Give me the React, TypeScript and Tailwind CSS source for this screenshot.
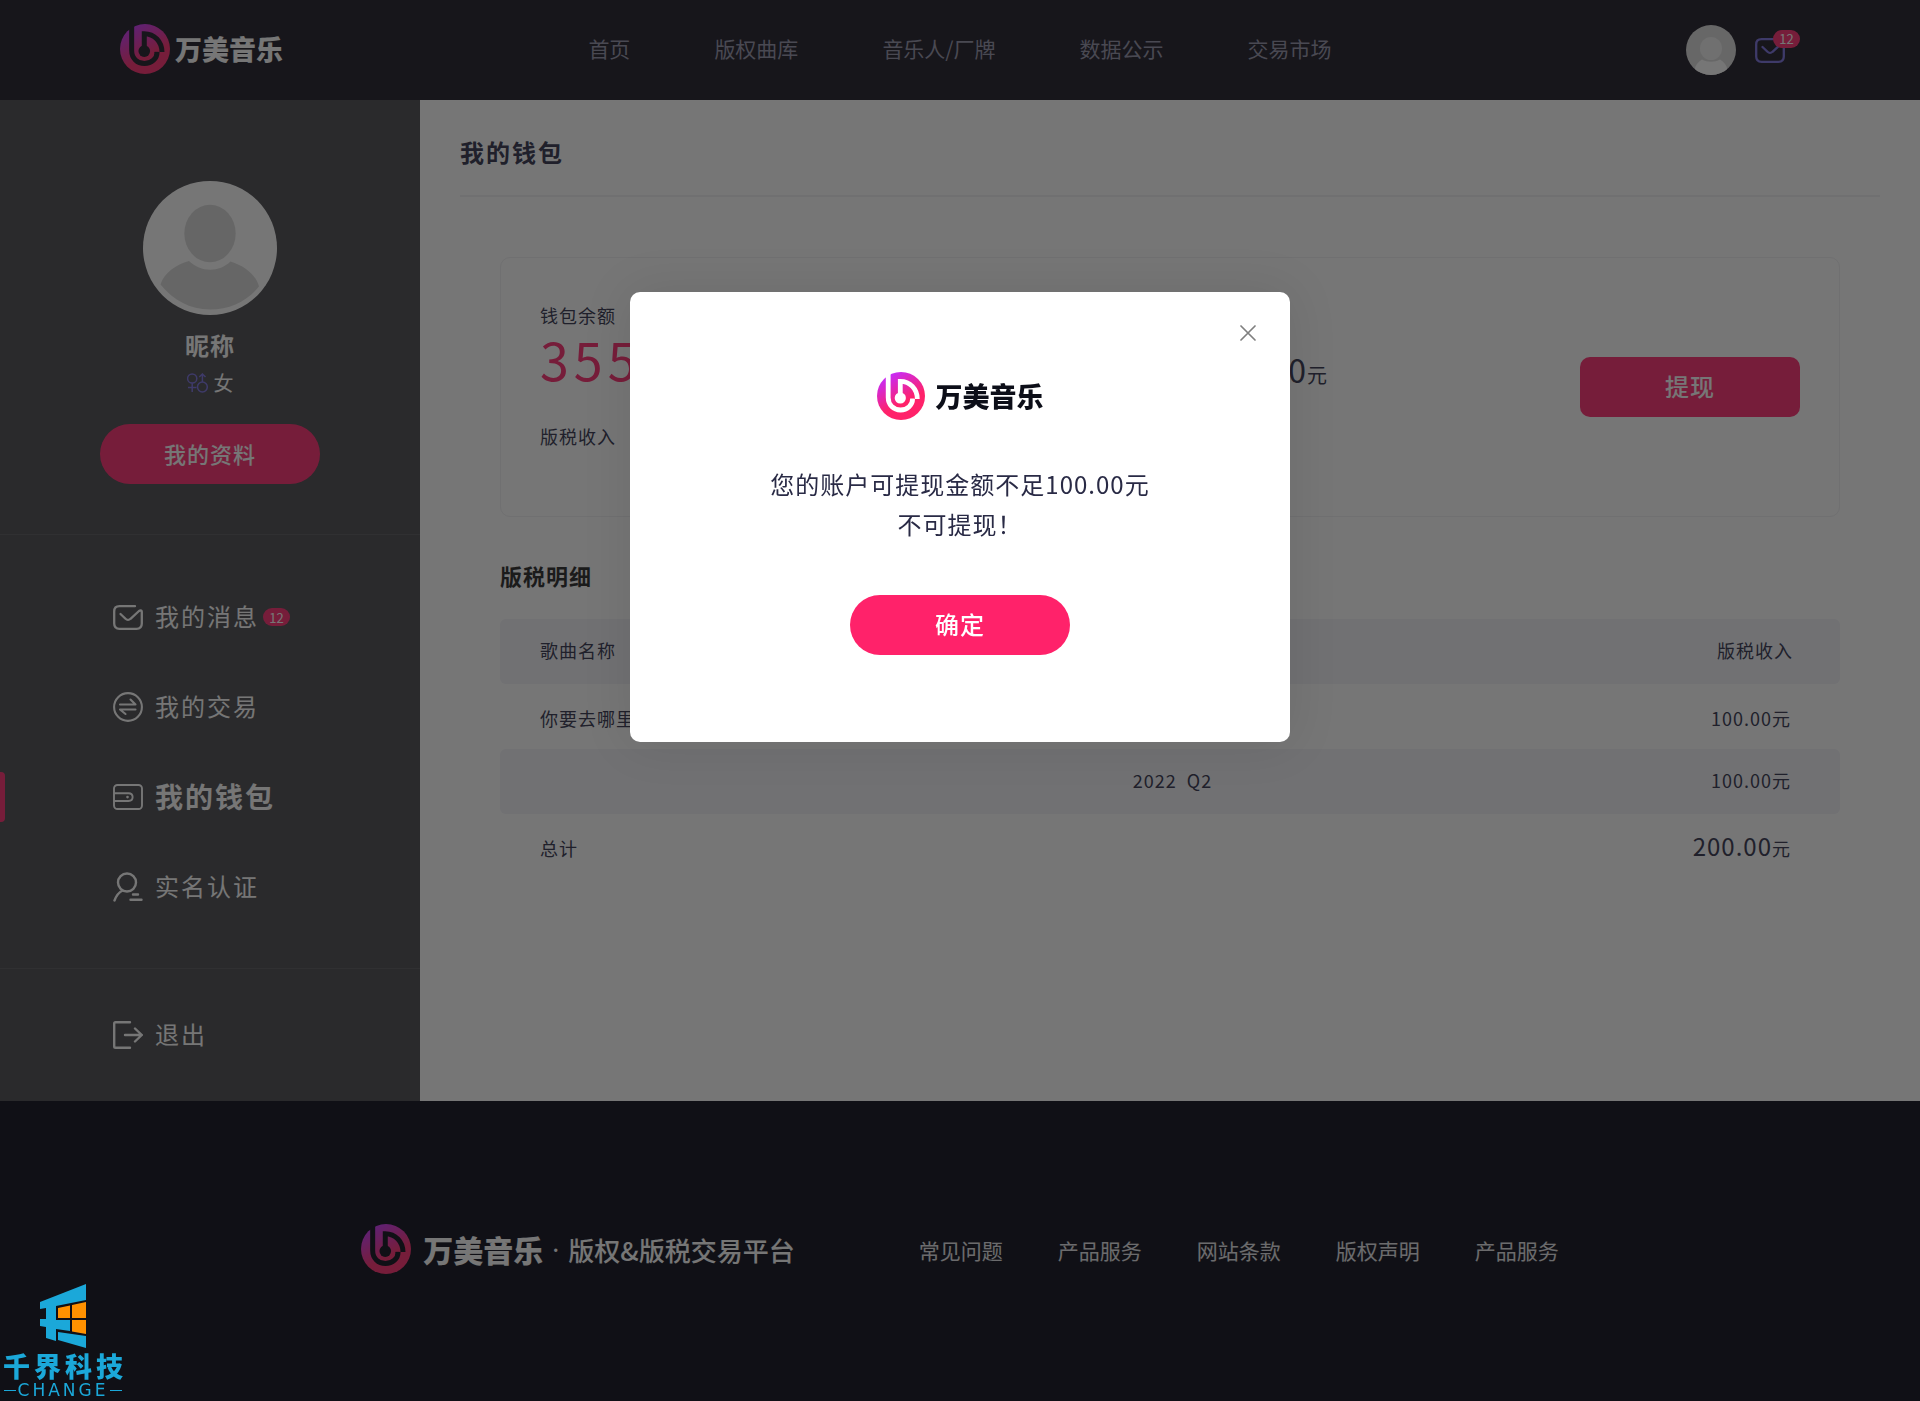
import React, { useId } from 'react';

const NAV_LINKS = ['首页', '版权曲库', '音乐人/厂牌', '数据公示', '交易市场'];
const FOOTER_LINKS = ['常见问题', '产品服务', '网站条款', '版权声明', '产品服务'];

const LogoMark: React.FC<{ className: string }> = ({ className }) => {
  const id = useId();
  return (
    <svg className={className} viewBox="0 0 48 48" aria-hidden="true">
      <defs>
        <linearGradient id={`${id}-fill`} x1="0.2" y1="0.05" x2="0.6" y2="0.8">
          <stop offset="0" stopColor="#c42cff" />
          <stop offset="0.8" stopColor="#ff226a" />
        </linearGradient>
        <mask id={`${id}-cut`}>
          <rect width="48" height="48" fill="white" />
          <g fill="none" stroke="black" strokeWidth="4.8">
            <path d="M11.2 0V25.5C11.2 33 16.5 38 23.5 38C30.5 38 35.6 33 35.6 26.8" />
            <path d="M23.3 26V9.3C33 9.3 40.3 17 40.3 27" />
            <path d="M33.2 27.2H37" strokeWidth="1" />
          </g>
          <circle cx="23.3" cy="26" r="5.6" fill="black" />
        </mask>
      </defs>
      <circle cx="24" cy="24" r="24" fill={`url(#${id}-fill)`} mask={`url(#${id}-cut)`} />
    </svg>
  );
};

const MailIcon: React.FC<{ className: string }> = ({ className }) => (
  <svg className={className} viewBox="0 0 30 25" fill="none" stroke="currentColor" strokeWidth="2.3" strokeLinecap="round" strokeLinejoin="round" aria-hidden="true">
    <path d="M22 1.2H6.500C3 1.2 1.200 3 1.200 6.500V18.500C1.200 22 3 23.800 6.500 23.800H23.500C27 23.800 28.800 22 28.800 18.500V6.800C28.800 5 27.300 5 26 6L17.500 13.800C16 15.300 14 15.300 12.500 13.800L7.500 9" />
  </svg>
);

const TradeIcon = () => (
  <svg className="h-[30px] w-[30px]" viewBox="0 0 30 30" fill="none" stroke="currentColor" strokeWidth="2.1" strokeLinecap="round" strokeLinejoin="round" aria-hidden="true">
    <circle cx="15" cy="15" r="13.900" />
    <path d="M7 12.500H22.500L17.500 7.500" />
    <path d="M22.500 17.500H7L12.500 22" />
  </svg>
);

const WalletIcon = () => (
  <svg className="h-[26px] w-[30px]" viewBox="0 0 30 26" fill="none" stroke="currentColor" strokeWidth="1.900" aria-hidden="true">
    <rect x="1" y="1" width="28" height="24" rx="3.500" />
    <path d="M1 9.200H15.500C21 9.200 21 17 15.500 17H1" />
    <circle cx="14.500" cy="13.100" r="1.300" fill="currentColor" stroke="none" />
  </svg>
);

const IdentityIcon = () => (
  <svg className="h-[30px] w-[30px]" viewBox="0 0 30 30" fill="none" stroke="currentColor" strokeWidth="2.400" strokeLinecap="round" aria-hidden="true">
    <circle cx="14" cy="10.500" r="9" />
    <path d="M1.500 28.500C3 24.500 5.500 20.500 9.500 18.500" />
    <path d="M20 22.500H25M17.500 27.800H28.500" />
  </svg>
);

const LogoutIcon = () => (
  <svg className="h-[28px] w-[30px]" viewBox="0 0 30 28" fill="none" stroke="currentColor" strokeWidth="2.400" strokeLinecap="round" strokeLinejoin="round" aria-hidden="true">
    <path d="M17 1.200H2.500C1.700 1.200 1.200 1.700 1.200 2.500V25.500C1.200 26.300 1.700 26.800 2.500 26.800H17" />
    <path d="M12 14H28.800M22 7.500L28.800 14L22 20.500" />
  </svg>
);

const GenderIcon = () => (
  <svg className="h-5 w-[21px] text-[#7369de]" viewBox="0 0 21 20" fill="none" stroke="currentColor" strokeWidth="1.500" aria-hidden="true">
    <circle cx="5.200" cy="5.500" r="4.600" />
    <path d="M5.200 10V19M1 14.500H9.500" />
    <circle cx="15.400" cy="14" r="4.900" />
    <path d="M15.400 9V1M12.300 4L15.400 1L18.500 4" />
  </svg>
);

const UserAvatar = () => (
  <svg className="h-[134px] w-[134px]" viewBox="0 0 134 134" role="img" aria-label="头像">
    <circle cx="67" cy="67" r="67" fill="#fff" />
    <ellipse cx="67" cy="52.500" rx="25.700" ry="28.800" fill="#d8d8d8" />
    <path d="M46 80C58 91.500 76 91.500 87.500 80.500C102 85 113 94 116 105.500C104 120 87 128.500 67 128.500C47 128.500 30 119 17.500 103.500C21 92 33 83.500 46 80Z" fill="#d8d8d8" />
  </svg>
);

const SmallAvatar = () => (
  <svg className="h-[50px] w-[50px]" viewBox="0 0 50 50" role="img" aria-label="账户">
    <defs>
      <clipPath id="small-avatar">
        <circle cx="25" cy="25" r="25" />
      </clipPath>
    </defs>
    <g clipPath="url(#small-avatar)">
      <rect width="50" height="50" fill="#dadada" />
      <path d="M16 34.500C21 37.500 29 37.500 34 34.500C38 37 40.500 40 41.500 45L35 50H15L8.500 45C9.500 40 12 37 16 34.500Z" fill="#fff" />
      <ellipse cx="25" cy="23.500" rx="11" ry="11.500" fill="#f0f0f0" />
    </g>
  </svg>
);

const Badge: React.FC<{ count: number; className?: string }> = ({ count, className = '' }) => (
  <span className={`flex h-[18px] w-[27px] items-center justify-center rounded-full bg-[#ff226a] text-[13px] leading-none ${className}`}>
    {count}
  </span>
);

interface MenuItem {
  label: string;
  icon: React.ReactNode;
  badge?: number;
  active?: boolean;
}

const MENU: MenuItem[] = [
  { label: '我的消息', icon: <MailIcon className="h-[25px] w-[30px]" />, badge: 12 },
  { label: '我的交易', icon: <TradeIcon /> },
  { label: '我的钱包', icon: <WalletIcon />, active: true },
  { label: '实名认证', icon: <IdentityIcon /> },
];

const MenuLink: React.FC<{ item: MenuItem }> = ({ item }) => (
  <a href="#" className="relative flex h-[90px] items-center pl-[113px] text-white">
    {item.active && <span className="absolute left-0 h-[50px] w-[5px] rounded-r-sm bg-[#ff226a]" />}
    {item.icon}
    <span className={item.active ? 'ml-3 pb-0.5 text-[28px] font-bold tracking-[2px]' : 'ml-3 pb-0.5 text-2xl tracking-[2px]'}>
      {item.label}
    </span>
    {item.badge && <Badge count={item.badge} className="ml-1" />}
  </a>
);

const Header = () => (
  <header className="grid h-[100px] grid-cols-[1fr_auto_1fr] items-center bg-[#120f1c] px-[120px] pb-0.5">
    <a href="#" className="flex items-center gap-[5px] text-white">
      <LogoMark className="h-[50px] w-[50px]" />
      <span className="text-[27px] font-black">万美音乐</span>
    </a>
    <nav className="flex gap-[84px] text-[21px] text-[#8f8ea6]">
      {NAV_LINKS.map((label) => (
        <a key={label} href="#">{label}</a>
      ))}
    </nav>
    <div className="flex items-center justify-end gap-[19px] pt-0.5 text-white">
      <SmallAvatar />
      <a href="#" className="relative mr-[15px] text-[#7369de]" aria-label="消息">
        <MailIcon className="h-[25px] w-[30px]" />
        <Badge count={12} className="absolute -right-[15px] -top-2 text-white" />
      </a>
    </div>
  </header>
);

const Sidebar = () => (
  <aside className="w-[420px] shrink-0 bg-[#414146] text-white">
    <div className="flex flex-col items-center border-b border-[#505056] pb-[50px] pt-[81px]">
      <UserAvatar />
      <p className="mt-[14px] text-2xl font-bold tracking-[1px]">昵称</p>
      <p className="mt-2 flex h-7 items-center gap-1.5 text-xl">
        <GenderIcon />
        女
      </p>
      <button className="mt-[27px] h-[60px] w-[220px] rounded-full bg-[#ff226a] pb-0.5 text-[22px] font-medium tracking-[1px]">
        我的资料
      </button>
    </div>
    <nav className="border-b border-[#505056] pb-9 pt-[37px]">
      {MENU.map((item) => (
        <MenuLink key={item.label} item={item} />
      ))}
    </nav>
    <div className="py-[21px]">
      <MenuLink item={{ label: '退出', icon: <LogoutIcon /> }} />
    </div>
  </aside>
);

const BalanceCard = () => (
  <section className="flex min-h-[260px] items-center justify-between rounded-[10px] border border-[#efeff2] px-[39px]">
    <div className="flex-1 self-start pt-[43px]">
      <p className="text-lg leading-7 tracking-[1px]">钱包余额</p>
      <p className="mt-1 text-[52px] leading-[52px] tracking-[5px] text-[#ff226a]">
        355.00<span className="text-xl">元</span>
      </p>
      <p className="mt-[35px] text-lg leading-7 tracking-[1px]">版税收入</p>
    </div>
    <p className="self-start pt-[87px] text-[32px] leading-[48px] tracking-[1px]">
      0.00<span className="text-xl">元</span>
    </p>
    <div className="flex w-[472px] justify-end">
      <button className="h-[60px] w-[220px] rounded-[10px] bg-[#ff226a] pb-0.5 text-2xl font-medium tracking-[1px] text-white">
        提现
      </button>
    </div>
  </section>
);

const RoyaltyTable = () => (
  <table className="mt-7 w-full table-fixed border-separate border-spacing-0 text-left text-lg tracking-[1px]">
    <thead>
      <tr className="h-[65px] bg-[#f2f2f8]">
        <th className="w-[47%] rounded-l-md pb-1 pl-10 font-normal">歌曲名称</th>
        <th className="pb-1 pl-[3px] font-normal">结算周期</th>
        <th className="rounded-r-md pb-1 pr-[47px] text-right font-normal">版税收入</th>
      </tr>
    </thead>
    <tbody>
      <tr className="h-[65px]">
        <td className="pl-10 pt-0.5">你要去哪里</td>
        <td className="whitespace-pre pl-[3px] pt-0.5">2022  Q1</td>
        <td className="pr-[49px] pt-0.5 text-right">100.00元</td>
      </tr>
      <tr className="h-[65px] bg-[#f2f2f8]">
        <td className="rounded-l-md pl-10"></td>
        <td className="whitespace-pre pb-1 pl-[3px]">2022  Q2</td>
        <td className="rounded-r-md pb-1 pr-[49px] text-right">100.00元</td>
      </tr>
      <tr className="h-[65px]">
        <td className="pl-10 pt-0.5">总计</td>
        <td></td>
        <td className="pr-[49px] text-right">
          <span className="text-2xl leading-7">200.00</span>元
        </td>
      </tr>
    </tbody>
  </table>
);

const Footer = () => (
  <footer className="flex h-[300px] items-center justify-center gap-[124px] bg-[#02020f] text-white">
    <div className="flex items-center pb-1">
      <LogoMark className="h-[50px] w-[50px]" />
      <span className="ml-3 text-[30px] font-black">万美音乐</span>
      <span className="mx-[9px] font-['Noto_Sans'] text-[26px]">·</span>
      <span className="text-[26px] font-medium">版权&amp;版税交易平台</span>
    </div>
    <nav className="flex gap-[55px] text-[21px] text-[#e4e4e8]">
      {FOOTER_LINKS.map((label, i) => (
        <a key={i} href="#">{label}</a>
      ))}
    </nav>
  </footer>
);

const WithdrawDialog = () => (
  <div className="fixed inset-0 flex items-start justify-center bg-[#1b1b1b]/60 pt-[292px]">
    <div
      role="dialog"
      aria-modal="true"
      className="relative flex h-[450px] w-[660px] flex-col items-center rounded-[10px] bg-white pt-20 shadow-[0_0_50px_rgba(0,0,0,0.1)]"
    >
      <button className="absolute right-[34px] top-[33px] text-[#808080]" aria-label="关闭">
        <svg className="h-4 w-4" viewBox="0 0 16 16" fill="none" stroke="currentColor" strokeWidth="1.700" strokeLinecap="round">
          <path d="M1 1L15 15M15 1L1 15" />
        </svg>
      </button>
      <div className="flex items-center gap-[11px] text-[#0c0e18]">
        <LogoMark className="h-12 w-12" />
        <span className="text-[27px] font-black">万美音乐</span>
      </div>
      <p className="mt-[44px] text-center text-2xl leading-10 tracking-[1px] text-[#292a45]">
        您的账户可提现金额不足100.00元
        <br />
        不可提现！
      </p>
      <button className="mt-[51px] h-[60px] w-[220px] rounded-full bg-[#ff226a] pb-0.5 text-2xl font-medium tracking-[1px] text-white">
        确定
      </button>
    </div>
  </div>
);

const CompanyMark = () => (
  <div className="fixed bottom-0 left-0 flex w-[126px] flex-col items-center whitespace-nowrap text-[#1ba8d9]">
    <svg className="h-[64px] w-[46px]" viewBox="0 0 46 64" aria-hidden="true">
      <path fill="currentColor" d="M46 0V16L16 22V36H30V47L16 45V57L6 54V43L0 42V35H6V24L0 25V18Z" />
      <path fill="currentColor" d="M18 48L46 52V64L18 56Z" />
      <path fill="#ff9100" d="M18 24L30 21.500V34H18ZM32 21L46 18V34H32ZM32 36H46V50L32 47.500Z" />
    </svg>
    <span className="pl-1 pt-0.5 text-[27px] font-black leading-8 tracking-[4px]">千界科技</span>
    <span className="flex items-center gap-0.5 pb-[3px] font-['DejaVu_Sans'] text-[17px] leading-4">
      <i className="h-px w-3 bg-current" />
      <span className="tracking-[3px]">CHANGE</span>
      <i className="h-px w-3 bg-current" />
    </span>
  </div>
);

export default function App() {
  return (
    <div className="font-['Noto_Sans_CJK_SC',sans-serif]">
      <Header />
      <div className="flex">
        <Sidebar />
        <main className="flex-1 bg-white px-10 text-[#292a45]">
          <h1 className="border-b-2 border-[#efeff2] pb-[23px] pt-8 text-2xl leading-10 font-bold tracking-[2px]">
            我的钱包
          </h1>
          <div className="px-10 pt-[60px]">
            <BalanceCard />
            <h2 className="mt-[42px] text-[22px] leading-8 font-bold tracking-[1px] text-[#1c1c1c]">版税明细</h2>
            <RoyaltyTable />
          </div>
        </main>
      </div>
      <Footer />
      <WithdrawDialog />
      <CompanyMark />
    </div>
  );
}
